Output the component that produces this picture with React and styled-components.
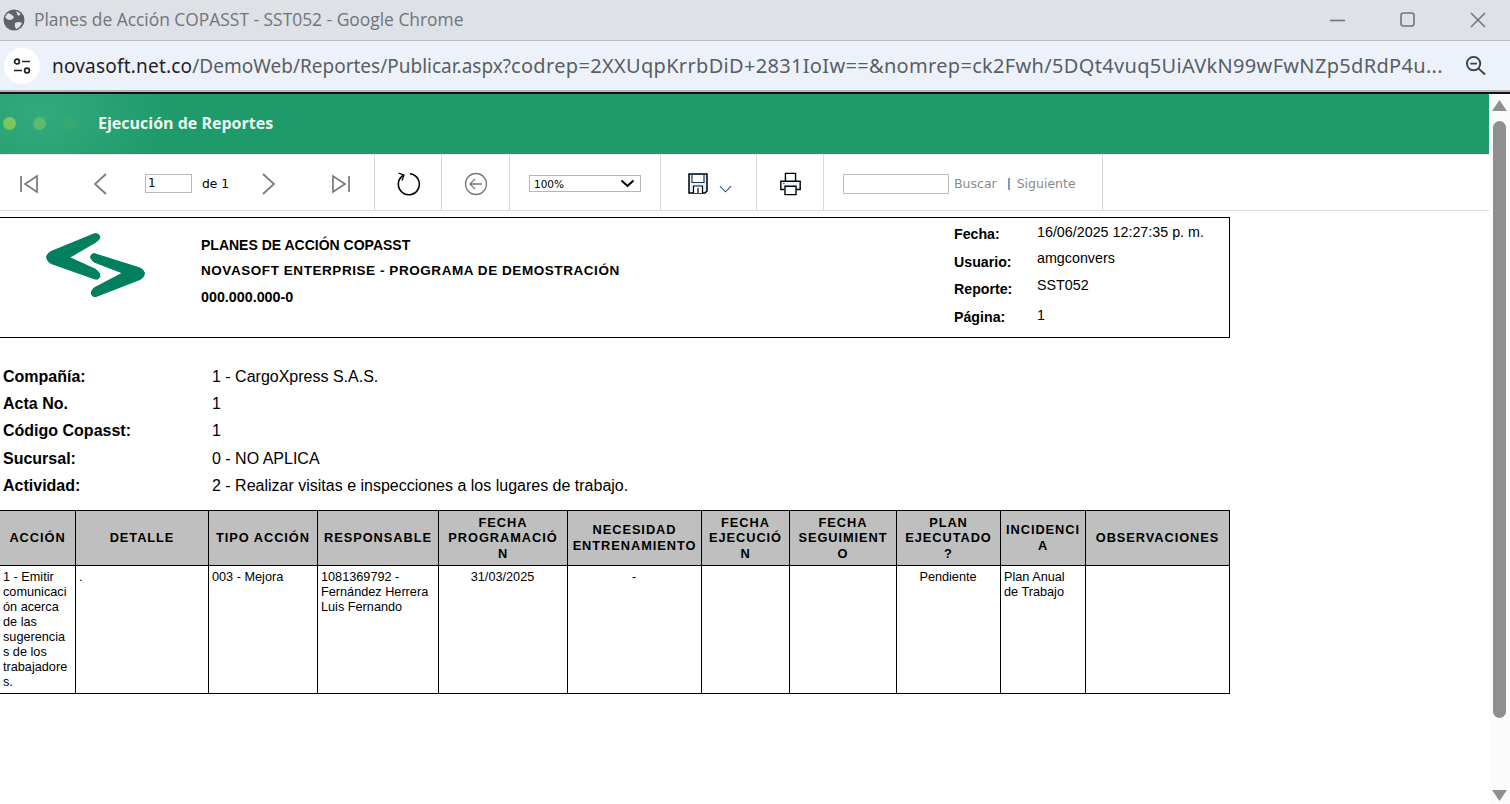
import React from "react";
import styled, { createGlobalStyle } from "styled-components";

const GlobalStyle = createGlobalStyle`
  html, body {
    margin: 0;
    padding: 0;
    height: 100%;
    overflow: hidden;
    background: #fff;
  }
  * { box-sizing: border-box; }
`;

const Page = styled.div`
  width: 1510px;
  height: 804px;
  display: flex;
  flex-direction: column;
  overflow: hidden;
  font-family: "Liberation Sans", Arial, sans-serif;
`;

const TitleBar = styled.div`
  height: 41px;
  flex: none;
  display: flex;
  align-items: center;
  padding-left: 3px;
  background: #dee1e6;
  border-bottom: 1px solid #b9bbbe;
`;

const TitleText = styled.span`
  margin-left: 9px;
  margin-top: -2px;
  flex: 1;
  font: 17.4px "Open Sans", sans-serif;
  color: #70757a;
`;

const WinButton = styled.div`
  width: 70px;
  display: flex;
  justify-content: center;
  align-items: center;
  margin-right: ${(p) => p.$mr || 0}px;
`;

const AddressBar = styled.div`
  height: 49px;
  flex: none;
  display: flex;
  align-items: center;
  padding: 0 24px 0 4px;
  background: #edf2fa;
`;

const TuneBadge = styled.div`
  width: 36px;
  height: 36px;
  flex: none;
  display: flex;
  align-items: center;
  justify-content: center;
  border-radius: 50%;
  background: #fff;
`;

const UrlText = styled.div`
  margin-left: 12px;
  width: 1396px;
  flex: none;
  white-space: nowrap;
  overflow: hidden;
  font: 19px "Noto Sans", sans-serif;
  color: #5a5e63;
  b { font-weight: 400; color: #1f2124; letter-spacing: 0.2px; }
`;

const UrlQuery = styled.span`
  font-size: 20px;
  letter-spacing: 0.32px;
`;

const ZoomIcon = styled.div`
  margin-left: auto;
  display: flex;
`;

const Divider = styled.div`
  height: 4px;
  flex: none;
  background: #fff;
  border-top: 2px solid #b4b6b9;
  border-bottom: 2px solid #111;
  background-clip: padding-box;
`;

const Body = styled.div`
  flex: 1;
  display: flex;
  min-height: 0;
`;

const Content = styled.div`
  width: 1489px;
  flex: none;
  display: flex;
  flex-direction: column;
`;

const GreenHeader = styled.div`
  height: 60px;
  flex: none;
  display: flex;
  align-items: center;
  padding: 0 0 2px 3px;
  background: radial-gradient(ellipse 130px 90px at 40px 20px, #33aa7d 0%, #1e9a6b 100%);
`;

const Dot = styled.span`
  width: 13px;
  height: 13px;
  margin-right: 17px;
  border-radius: 50%;
  background: ${(p) => p.$color};
`;

const HeaderTitle = styled.span`
  margin-left: 5px;
  font: 700 16px "Open Sans", sans-serif;
  color: #f0f6f2;
`;

const Toolbar = styled.div`
  height: 57px;
  flex: none;
  display: flex;
  border-top: 1px solid #e4e4e4;
  border-bottom: 1px solid #dcdcdc;
`;

const ToolGroup = styled.div`
  width: ${(p) => p.$w}px;
  flex: none;
  display: flex;
  align-items: center;
  padding-left: ${(p) => p.$pl || 0}px;
  padding-top: 2px;
  border-right: 1px solid #d8d8d8;
`;

const ToolIcon = styled.span`
  display: flex;
  flex: none;
  margin-left: ${(p) => p.$ml || 0}px;
  margin-top: ${(p) => p.$mt || 0}px;
`;

const PageInput = styled.div`
  width: 47px;
  height: 19px;
  margin-left: 37px;
  padding-left: 2px;
  border: 1px solid #b8b8b8;
  font: 12px/17px "DejaVu Sans", sans-serif;
  color: #000;
`;

const OfLabel = styled.span`
  margin-left: 10px;
  width: 29px;
  font: 12.3px "DejaVu Sans", sans-serif;
  color: #000;
`;

const ZoomSelect = styled.div`
  width: 112px;
  height: 17px;
  display: flex;
  align-items: center;
  justify-content: space-between;
  padding: 0 5px 0 4px;
  border: 1px solid #b5b5b5;
  font: 10.5px "DejaVu Sans", sans-serif;
  color: #000;
`;

const SearchInput = styled.div`
  width: 106px;
  height: 20px;
  border: 1px solid #bdbdbd;
`;

const SearchLink = styled.span`
  margin-left: ${(p) => p.$ml}px;
  padding-left: ${(p) => (p.$bar ? 7 : 0)}px;
  border-left: ${(p) => (p.$bar ? "2px solid #7d9cb8" : "none")};
  font: 12.5px/12px "DejaVu Sans", sans-serif;
  color: #8a8a8a;
`;

const ReportHeader = styled.div`
  width: 1230px;
  height: 121px;
  margin-top: 6px;
  flex: none;
  display: flex;
  border: 1px solid #000;
  border-left: none;
`;

const LogoCell = styled.div`
  width: 201px;
  flex: none;
  padding: 14px 0 0 44px;
`;

const CompanyBlock = styled.div`
  flex: 1;
  display: flex;
  flex-direction: column;
  padding-top: 19px;
`;

const CompanyLine = styled.div`
  height: ${(p) => p.$h}px;
  font: 700 ${(p) => p.$size}px "Liberation Sans", sans-serif;
  letter-spacing: ${(p) => p.$track || 0}px;
  color: #000;
`;

const MetaGrid = styled.div`
  width: 275px;
  flex: none;
  display: grid;
  grid-template-columns: 83px 1fr;
  grid-auto-rows: 27.5px;
  padding-top: 6px;
`;

const MetaLabel = styled.div`
  padding-top: 2px;
  font: 700 14.2px "Liberation Sans", sans-serif;
  color: #000;
`;

const MetaValue = styled.div`
  margin-top: ${(p) => p.$up || 0}px;
  font: 14.3px "Liberation Sans", sans-serif;
  color: #000;
`;

const Filters = styled.div`
  margin-top: 25px;
  padding-left: 3px;
  display: grid;
  grid-template-columns: 209px 1fr;
  grid-auto-rows: 27.4px;
  align-items: center;
  flex: none;
`;

const FilterLabel = styled.div`
  font: 700 16px "Liberation Sans", sans-serif;
  color: #000;
`;

const FilterValue = styled.div`
  font: 16px "Liberation Sans", sans-serif;
  color: #000;
`;

const ReportTable = styled.table`
  width: 1229.5px;
  margin-top: 10px;
  border-collapse: collapse;
  table-layout: fixed;
  flex: none;
`;

const HeadCell = styled.th`
  height: 55px;
  padding: 0 1px;
  border: 1px solid #000;
  background: #bfbfbf;
  font: 700 12.8px/15.5px "Liberation Sans", sans-serif;
  letter-spacing: 0.95px;
  color: #000;
  text-align: center;
  vertical-align: middle;
  white-space: pre-line;
  &:first-child { border-left: none; }
`;

const DataCell = styled.td`
  height: 128px;
  padding: 4px ${(p) => (p.$center ? 4 : 3)}px 0 3px;
  border: 1px solid #000;
  font: 12.7px/15px "Liberation Sans", sans-serif;
  color: #000;
  text-align: ${(p) => (p.$center ? "center" : "left")};
  vertical-align: top;
  white-space: pre-line;
  &:first-child { border-left: none; }
`;

const Scrollbar = styled.div`
  width: 21px;
  flex: none;
  display: flex;
  flex-direction: column;
  align-items: center;
  background: #fbfbfb;
`;

const ScrollThumb = styled.div`
  width: 13px;
  height: 597px;
  margin-top: 10px;
  border-radius: 7px;
  background: #8f8f8f;
`;

const ScrollArrow = styled.svg`
  flex: none;
  margin-top: ${(p) => p.$mt}px;
`;

const COLUMNS = [
  { w: 75.5, title: "ACCIÓN" },
  { w: 133, title: "DETALLE" },
  { w: 109, title: "TIPO ACCIÓN" },
  { w: 121, title: "RESPONSABLE" },
  { w: 129, title: "FECHA\nPROGRAMACIÓ\nN" },
  { w: 134, title: "NECESIDAD\nENTRENAMIENTO" },
  { w: 88, title: "FECHA\nEJECUCIÓ\nN" },
  { w: 107, title: "FECHA\nSEGUIMIENT\nO" },
  { w: 104, title: "PLAN\nEJECUTADO\n?" },
  { w: 85, title: "INCIDENCI\nA" },
  { w: 144, title: "OBSERVACIONES" },
];

const ROW = [
  { text: "1 - Emitir\ncomunicaci\nón acerca\nde las\nsugerencia\ns de los\ntrabajadore\ns." },
  { text: "." },
  { text: "003 - Mejora" },
  { text: "1081369792 -\nFernández Herrera\nLuis Fernando" },
  { text: "31/03/2025", center: true },
  { text: "-", center: true },
  { text: "" },
  { text: "" },
  { text: "Pendiente", center: true },
  { text: "Plan Anual\nde Trabajo" },
  { text: "" },
];

const FILTERS = [
  ["Compañía:", "1 - CargoXpress S.A.S."],
  ["Acta No.", "1"],
  ["Código Copasst:", "1"],
  ["Sucursal:", "0 - NO APLICA"],
  ["Actividad:", "2 - Realizar visitas e inspecciones a los lugares de trabajo."],
];

const META = [
  ["Fecha:", "16/06/2025 12:27:35 p. m.", 0],
  ["Usuario:", "amgconvers", -2],
  ["Reporte:", "SST052", -2],
  ["Página:", "1", 0],
];

const GRAY = "#7d7873";

function Nav({ d, w = 18, h = 24 }) {
  return (
    <svg width={w} height={h} viewBox={`0 0 ${w} ${h}`} fill="none" stroke={GRAY} strokeWidth="1.7">
      <path d={d} />
    </svg>
  );
}

function Logo() {
  return (
    <svg width="104" height="68" viewBox="0 0 104 68" fill="#00805f" stroke="#00805f" strokeWidth="1" strokeLinejoin="round">
      <path d="M51 1.5Q55.5 1.500 56 5Q55.500 8 52 10L25.500 25.500L52 37.500Q56.500 41 56 44.500Q54.500 48 51 47L7 31.500Q2.500 29 2.500 24.500Q3.500 21.500 7 19.500Z" />
      <path d="M50 21.500Q46.500 22 46.500 25.500Q47.500 28 50 30L78.500 41L50 56Q46.500 59 47.500 62.500Q49 65.500 52 64.500L96 47.500Q100.500 45 100.500 41Q99.500 37.500 96 36Z" />
    </svg>
  );
}

export default function App() {
  return (
    <Page>
      <GlobalStyle />
      <TitleBar>
        <svg width="22" height="22" viewBox="0 0 22 22">
          <circle cx="11" cy="11" r="10.5" fill="#5f6368" />
          <path d="M5 4Q9 5 11 8Q10 11 6 11Q3 10 2 8ZM12 14Q16 12 19 14Q17 19 13 20Q11 17 12 14ZM13 2L18 5L15 7Z" fill="#dee1e6" />
        </svg>
        <TitleText>Planes de Acción COPASST - SST052 - Google Chrome</TitleText>
        <WinButton>
          <svg width="16" height="16" viewBox="0 0 16 16"><path d="M0 8.5H15" stroke="#70757a" strokeWidth="1.6" /></svg>
        </WinButton>
        <WinButton>
          <svg width="16" height="16" viewBox="0 0 16 16"><rect x="1" y="1" width="13" height="13" rx="2.5" fill="none" stroke="#70757a" strokeWidth="1.6" /></svg>
        </WinButton>
        <WinButton $mr={-3}>
          <svg width="18" height="18" viewBox="0 0 18 18"><path d="M2 2L16 16M16 2L2 16" stroke="#70757a" strokeWidth="1.5" /></svg>
        </WinButton>
      </TitleBar>
      <AddressBar>
        <TuneBadge>
          <svg width="20" height="18" viewBox="0 0 20 18" fill="none" stroke="#1f2124" strokeWidth="1.7">
            <circle cx="5" cy="4.5" r="2.4" />
            <path d="M10 4.5H18M2 13.5H10" />
            <circle cx="15" cy="13.5" r="2.4" />
          </svg>
        </TuneBadge>
        <UrlText>
          <b>novasoft.net.co</b>/DemoWeb/Reportes/Publicar.aspx?
          <UrlQuery>codrep=2XXUqpKrrbDiD+2831IoIw==&amp;nomrep=ck2Fwh/5DQt4vuq5UiAVkN99wFwNZp5dRdP4u...</UrlQuery>
        </UrlText>
        <ZoomIcon>
          <svg width="21" height="21" viewBox="0 0 22 22" fill="none" stroke="#3c4043" strokeWidth="2">
            <circle cx="9" cy="9" r="7" />
            <path d="M5.5 9H12.5M14 14L21 20.5" />
          </svg>
        </ZoomIcon>
      </AddressBar>
      <Divider />
      <Body>
        <Content>
          <GreenHeader>
            <Dot $color="#7cc65e" />
            <Dot $color="#5fb96c" />
            <Dot $color="#37a870" />
            <HeaderTitle>Ejecución de Reportes</HeaderTitle>
          </GreenHeader>
          <Toolbar>
            <ToolGroup $w={375} $pl={20}>
              <ToolIcon><Nav d="M1 4V20M17 4V20L5 12Z" /></ToolIcon>
              <ToolIcon $ml={54}><Nav w={16} d="M14 2L3 12L14 22" /></ToolIcon>
              <PageInput>1</PageInput>
              <OfLabel>de 1</OfLabel>
              <ToolIcon $ml={30}><Nav w={16} d="M2 2L13 12L2 22" /></ToolIcon>
              <ToolIcon $ml={55}><Nav d="M17 4V20M1 4V20L13 12Z" /></ToolIcon>
            </ToolGroup>
            <ToolGroup $w={67} $pl={20}>
              <svg width="26" height="26" viewBox="0 0 26 26" fill="none" stroke="#000" strokeWidth="1.6">
                <path d="M8 4.5A10.5 10.5 0 1 0 15 2.8" />
                <path d="M3.5 2L9 4.2L7 9.5" strokeWidth="1.3" />
              </svg>
            </ToolGroup>
            <ToolGroup $w={68} $pl={22}>
              <svg width="24" height="24" viewBox="0 0 24 24" fill="none" stroke={GRAY} strokeWidth="1.3">
                <circle cx="12" cy="12" r="10.5" />
                <path d="M18 12H6M11 7L6 12L11 17" />
              </svg>
            </ToolGroup>
            <ToolGroup $w={151} $pl={19}>
              <ZoomSelect>
                100%
                <svg width="15" height="9" viewBox="0 0 15 9" fill="none" stroke="#000" strokeWidth="2"><path d="M1.5 1.5L7.5 7L13.5 1.5" /></svg>
              </ZoomSelect>
            </ToolGroup>
            <ToolGroup $w={96} $pl={27}>
              <svg width="20" height="21" viewBox="0 0 20 21" fill="none" stroke="#000" strokeWidth="1.5">
                <path d="M1 1H19V18L17 20H1Z" fill="#e6f0fb" />
                <path d="M4 1.5H16V9.5H4Z" fill="#fff" stroke="#1a3a5a" strokeWidth="1.2" />
                <path d="M5.5 20V13H14.5V20M10 15V20" strokeWidth="1.2" fill="#fff" />
              </svg>
              <ToolIcon $ml={11} $mt={10}>
                <svg width="13" height="8" viewBox="0 0 14 8" fill="none" stroke="#1c4f86" strokeWidth="1.1"><path d="M1 1L7 7L13 1" /></svg>
              </ToolIcon>
            </ToolGroup>
            <ToolGroup $w={67} $pl={22}>
              <svg width="23" height="24" viewBox="0 0 23 26" fill="none" stroke="#000" strokeWidth="1.5">
                <path d="M6 10V1.5H17V10" />
                <path d="M5 19H1V10H22V19H18" fill="#eef5fc" />
                <path d="M5.5 15.5H17.5V24.5H5.5Z" fill="#fff" />
                <path d="M3.5 12.5H5" stroke="#333" strokeWidth="1" />
              </svg>
            </ToolGroup>
            <ToolGroup $w={279} $pl={19}>
              <SearchInput />
              <SearchLink $ml={5}>Buscar</SearchLink>
              <SearchLink $ml={11} $bar>Siguiente</SearchLink>
            </ToolGroup>
          </Toolbar>
          <ReportHeader>
            <LogoCell><Logo /></LogoCell>
            <CompanyBlock>
              <CompanyLine $h={26} $size={14}>PLANES DE ACCIÓN COPASST</CompanyLine>
              <CompanyLine $h={26} $size={13.5} $track={0.56}>NOVASOFT ENTERPRISE - PROGRAMA DE DEMOSTRACIÓN</CompanyLine>
              <CompanyLine $h={16} $size={14.3}>000.000.000-0</CompanyLine>
            </CompanyBlock>
            <MetaGrid>
              {META.map(([label, value, up]) => (
                <React.Fragment key={label}>
                  <MetaLabel>{label}</MetaLabel>
                  <MetaValue $up={up}>{value}</MetaValue>
                </React.Fragment>
              ))}
            </MetaGrid>
          </ReportHeader>
          <Filters>
            {FILTERS.map(([label, value]) => (
              <React.Fragment key={label}>
                <FilterLabel>{label}</FilterLabel>
                <FilterValue>{value}</FilterValue>
              </React.Fragment>
            ))}
          </Filters>
          <ReportTable>
            <colgroup>
              {COLUMNS.map((col) => (
                <col key={col.title} style={{ width: col.w }} />
              ))}
            </colgroup>
            <thead>
              <tr>
                {COLUMNS.map((col) => (
                  <HeadCell key={col.title}>{col.title}</HeadCell>
                ))}
              </tr>
            </thead>
            <tbody>
              <tr>
                {ROW.map((cell, i) => (
                  <DataCell key={i} $center={cell.center}>{cell.text}</DataCell>
                ))}
              </tr>
            </tbody>
          </ReportTable>
        </Content>
        <Scrollbar>
          <ScrollArrow $mt={6} width="15" height="11" viewBox="0 0 15 11"><path d="M7.5 0L15 11H0Z" fill="#8f8f8f" /></ScrollArrow>
          <ScrollThumb />
          <ScrollArrow $mt={72} width="15" height="11" viewBox="0 0 15 11"><path d="M7.5 11L0 0H15Z" fill="#8f8f8f" /></ScrollArrow>
        </Scrollbar>
      </Body>
    </Page>
  );
}
